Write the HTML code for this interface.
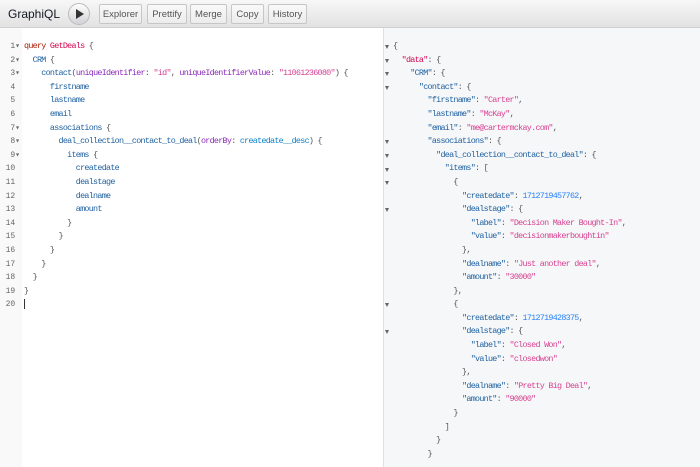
<!DOCTYPE html>
<html style="width:700px;height:467px;overflow:hidden"><head><style>
*{margin:0;padding:0;box-sizing:border-box}
body{width:700px;height:467px;overflow:hidden;background:#fff;font-family:"Liberation Sans",sans-serif;position:relative}
.tb{position:absolute;left:0;top:0;width:700px;height:28px;background:linear-gradient(#f7f7f7,#e2e2e2);border-bottom:1px solid #d0d0d0}
.title{position:absolute;left:8px;top:7px;font-size:12px;color:#141823}
.play{position:absolute;left:68px;top:3px;width:22px;height:22px;border-radius:50%;background:linear-gradient(#fdfdfd,#d2d3d6);border:1px solid #bbb}
.play:after{content:"";position:absolute;left:7px;top:5px;border-left:8px solid #333;border-top:5px solid transparent;border-bottom:5px solid transparent}
.btn{position:absolute;top:4px;height:20px;border:1px solid #c6c6c6;border-radius:2px;background:linear-gradient(#f9f9f9,#ececec);font-size:9.5px;color:#555;text-align:center;line-height:19px}
.code{position:absolute;top:40px;font-family:"Liberation Mono",monospace;font-size:8.4px;letter-spacing:-0.71px;line-height:13.6px;white-space:pre;color:#555}
.gut{position:absolute;left:0;top:28px;width:22px;height:439px;background:#f9f9f9}
.ln{position:absolute;left:0;top:40px;width:20px;font-family:"Liberation Mono",monospace;font-size:8px;line-height:13.6px;color:#666;white-space:pre;text-align:right}
.right{position:absolute;left:383px;top:28px;width:317px;height:439px;background:#f6f7f8;border-left:1px solid #e0e0e0}
.tri{position:absolute;left:385px;width:0;height:0;border-left:2.5px solid transparent;border-right:2.5px solid transparent;border-top:4px solid #666}
.k{color:#b11a04}.d{color:#d2054e}.p{color:#1f61a0}.a{color:#8b2bb9}.s{color:#d64292}.n{color:#2882f9}.e{color:#0b7fc7}
</style></head><body>
<div class="tb">
<div class="title">GraphiQL</div>
<div class="play"></div>
<div class="btn" style="left:99px;width:43px">Explorer</div>
<div class="btn" style="left:147px;width:40px">Prettify</div>
<div class="btn" style="left:190px;width:37px">Merge</div>
<div class="btn" style="left:231px;width:33px">Copy</div>
<div class="btn" style="left:268px;width:39px">History</div>
</div>
<div class="gut"></div>
<div class="ln">1▾
2▾
3▾
4 
5 
6 
7▾
8▾
9▾
10 
11 
12 
13 
14 
15 
16 
17 
18 
19 
20 </div>
<div class="code" style="left:24px"><span class="k">query</span> <span class="d">GetDeals</span> {
  <span class="p">CRM</span> {
    <span class="p">contact</span>(<span class="a">uniqueIdentifier</span>: <span class="s">"id"</span>, <span class="a">uniqueIdentifierValue</span>: <span class="s">"11061236080"</span>) {
      <span class="p">firstname</span>
      <span class="p">lastname</span>
      <span class="p">email</span>
      <span class="p">associations</span> {
        <span class="p">deal_collection__contact_to_deal</span>(<span class="a">orderBy</span>: <span class="e">createdate__desc</span>) {
          <span class="p">items</span> {
            <span class="p">createdate</span>
            <span class="p">dealstage</span>
            <span class="p">dealname</span>
            <span class="p">amount</span>
          }
        }
      }
    }
  }
}
<span style="border-left:1px solid #333"> </span></div>
<div class="right"></div>
<div class="tri" style="top:45px"></div>
<div class="tri" style="top:59px"></div>
<div class="tri" style="top:72px"></div>
<div class="tri" style="top:86px"></div>
<div class="tri" style="top:140px"></div>
<div class="tri" style="top:154px"></div>
<div class="tri" style="top:168px"></div>
<div class="tri" style="top:181px"></div>
<div class="tri" style="top:208px"></div>
<div class="tri" style="top:303px"></div>
<div class="tri" style="top:330px"></div>
<div class="code" style="left:393px">{
  <span class="d">"data"</span>: {
    <span class="p">"CRM"</span>: {
      <span class="p">"contact"</span>: {
        <span class="p">"firstname"</span>: <span class="s">"Carter"</span>,
        <span class="p">"lastname"</span>: <span class="s">"McKay"</span>,
        <span class="p">"email"</span>: <span class="s">"me@cartermckay.com"</span>,
        <span class="p">"associations"</span>: {
          <span class="p">"deal_collection__contact_to_deal"</span>: {
            <span class="p">"items"</span>: [
              {
                <span class="p">"createdate"</span>: <span class="n">1712719457762</span>,
                <span class="p">"dealstage"</span>: {
                  <span class="p">"label"</span>: <span class="s">"Decision Maker Bought-In"</span>,
                  <span class="p">"value"</span>: <span class="s">"decisionmakerboughtin"</span>
                },
                <span class="p">"dealname"</span>: <span class="s">"Just another deal"</span>,
                <span class="p">"amount"</span>: <span class="s">"30000"</span>
              },
              {
                <span class="p">"createdate"</span>: <span class="n">1712719428375</span>,
                <span class="p">"dealstage"</span>: {
                  <span class="p">"label"</span>: <span class="s">"Closed Won"</span>,
                  <span class="p">"value"</span>: <span class="s">"closedwon"</span>
                },
                <span class="p">"dealname"</span>: <span class="s">"Pretty Big Deal"</span>,
                <span class="p">"amount"</span>: <span class="s">"90000"</span>
              }
            ]
          }
        }</div>
</body></html>
